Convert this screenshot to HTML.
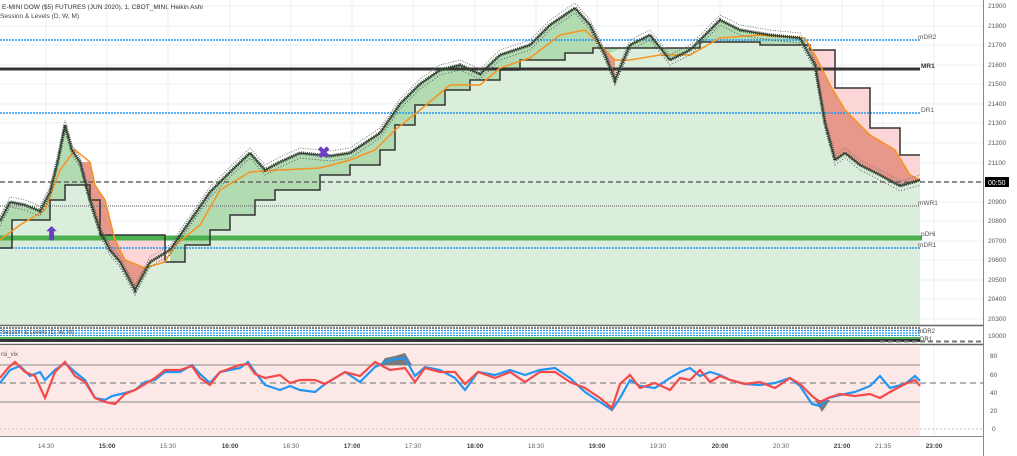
<!DOCTYPE html>
<html><head><meta charset="utf-8"><style>
html,body{margin:0;padding:0;background:#fff;width:1017px;height:456px;overflow:hidden}
svg{display:block;font-family:"Liberation Sans",sans-serif}
</style></head><body>
<svg width="1017" height="456" viewBox="0 0 1017 456" xmlns="http://www.w3.org/2000/svg">
<g stroke="#eaf0f4" stroke-width="1">
<line x1="46" y1="0" x2="46" y2="436"/><line x1="107" y1="0" x2="107" y2="436"/><line x1="168" y1="0" x2="168" y2="436"/><line x1="230" y1="0" x2="230" y2="436"/><line x1="291" y1="0" x2="291" y2="436"/><line x1="352" y1="0" x2="352" y2="436"/><line x1="413" y1="0" x2="413" y2="436"/><line x1="475" y1="0" x2="475" y2="436"/><line x1="536" y1="0" x2="536" y2="436"/><line x1="597" y1="0" x2="597" y2="436"/><line x1="658" y1="0" x2="658" y2="436"/><line x1="720" y1="0" x2="720" y2="436"/><line x1="781" y1="0" x2="781" y2="436"/><line x1="842" y1="0" x2="842" y2="436"/><line x1="883" y1="0" x2="883" y2="436"/><line x1="934" y1="0" x2="934" y2="436"/>
<line x1="0" y1="6" x2="983" y2="6"/><line x1="0" y1="26" x2="983" y2="26"/><line x1="0" y1="45" x2="983" y2="45"/><line x1="0" y1="65" x2="983" y2="65"/><line x1="0" y1="84" x2="983" y2="84"/><line x1="0" y1="104" x2="983" y2="104"/><line x1="0" y1="123" x2="983" y2="123"/><line x1="0" y1="143" x2="983" y2="143"/><line x1="0" y1="163" x2="983" y2="163"/><line x1="0" y1="202" x2="983" y2="202"/><line x1="0" y1="221" x2="983" y2="221"/><line x1="0" y1="241" x2="983" y2="241"/><line x1="0" y1="260" x2="983" y2="260"/><line x1="0" y1="280" x2="983" y2="280"/><line x1="0" y1="299" x2="983" y2="299"/><line x1="0" y1="319" x2="983" y2="319"/>
</g>
<polygon fill="#dbeedb" points="0,248 12,248 12,220 50,220 50,200 65,200 65,185 90,185 90,200 100,200 100,235 165,235 165,262 185,262 185,245 210,245 210,230 230,230 230,215 255,215 255,200 275,200 275,190 320,190 320,175 350,175 350,165 380,165 380,150 395,150 395,125 415,125 415,105 445,105 445,90 470,90 470,80 500,80 500,70 520,70 520,60 565,60 565,53 593,53 593,48 700,48 700,42 760,42 760,45 810,45 810,50 835,50 835,88 870,88 870,128 900,128 900,155 920,155 920,325 0,325"/>
<polygon fill="#b3dbb2" points="0,221 10,202 25,205 40,211 50,192 58,160 65,125 72,150 80,162 90,200 90,185 65,185 65,200 50,200 50,220 12,220 12,248 0,248"/>
<polygon fill="#b3dbb2" points="170,250 190,221 210,192 230,172 250,153 265,170 280,162 300,153 330,156 350,153 380,133 400,104 420,84 440,70 460,65 480,74 500,55 530,45 550,25 575,8 590,25 605,55 630,45 650,35 670,60 690,50 720,20 740,30 770,35 800,38 810,45 760,45 760,42 700,42 700,48 593,48 593,53 565,53 565,60 520,60 520,70 500,70 500,80 470,80 470,90 445,90 445,105 415,105 415,125 395,125 395,150 380,150 380,165 350,165 350,175 320,175 320,190 275,190 275,200 255,200 255,215 230,215 230,230 210,230 210,245 185,245 185,262 170,262"/>
<polygon fill="#fcd6d6" points="90,185 100,200 100,235 165,235 165,262 150,262 135,290 120,262 110,250 100,231 90,200"/>
<polygon fill="#fcd6d6" points="805,45 810,50 835,50 835,88 870,88 870,128 900,128 900,155 920,155 920,180 900,186 880,175 860,165 845,153 835,160 825,123 815,65 805,40"/>
<polygon fill="#e8978b" points="90,162 95,185 105,200 115,240 125,260 145,268 150,262 135,290 120,262 110,250 100,231 90,200 80,162"/>
<polygon fill="#e8978b" points="805,38 815,55 830,85 845,110 870,135 895,150 910,175 920,180 900,186 880,175 860,165 845,153 835,160 825,123 815,65"/>
<polygon fill="#e8978b" points="590,25 600,45 615,60 615,80 605,55"/>
<line x1="0" y1="40" x2="920" y2="40" stroke="#2196f3" stroke-width="1.5" stroke-dasharray="2,1"/>
<line x1="0" y1="69" x2="920" y2="69" stroke="#333" stroke-width="3"/>
<line x1="0" y1="113" x2="920" y2="113" stroke="#2196f3" stroke-width="1.5" stroke-dasharray="2,1"/>
<line x1="0" y1="206" x2="920" y2="206" stroke="#888" stroke-width="1.5" stroke-dasharray="1,1"/>
<line x1="0" y1="238" x2="922" y2="238" stroke="#4caf50" stroke-width="5"/>
<line x1="0" y1="248" x2="920" y2="248" stroke="#2196f3" stroke-width="1.5" stroke-dasharray="2,1"/>
<line x1="0" y1="182" x2="983" y2="182" stroke="#666" stroke-width="1.5" stroke-dasharray="5,3"/>
<polyline fill="none" stroke="#333" stroke-width="1.5" points="0,248 12,248 12,220 50,220 50,200 65,200 65,185 90,185 90,200 100,200 100,235 165,235 165,262 185,262 185,245 210,245 210,230 230,230 230,215 255,215 255,200 275,200 275,190 320,190 320,175 350,175 350,165 380,165 380,150 395,150 395,125 415,125 415,105 445,105 445,90 470,90 470,80 500,80 500,70 520,70 520,60 565,60 565,53 593,53 593,48 700,48 700,42 760,42 760,45 810,45 810,50 835,50 835,88 870,88 870,128 900,128 900,155 920,155"/>
<polyline fill="none" stroke="#f7931e" stroke-width="1.5" points="0,240 20,225 45,210 60,170 75,150 90,162 95,185 105,200 115,240 125,260 145,268 165,262 175,245 200,225 220,190 250,172 280,170 320,168 350,160 375,150 395,130 420,110 450,85 480,85 500,68 530,58 560,35 585,30 600,45 615,60 630,60 660,55 690,55 720,38 760,35 805,38 815,55 830,85 845,110 870,135 895,150 910,175 920,180"/>
<!-- wick band -->
<polyline fill="none" stroke="#777" stroke-width="1" stroke-dasharray="1,1.5" transform="translate(0,-5)" points="0,221 10,202 25,205 40,211 50,192 58,160 65,125 72,150 80,162 90,200 100,231 110,250 120,262 135,290 150,262 170,250 190,221 210,192 230,172 250,153 265,170 280,162 300,153 330,156 350,153 380,133 400,104 420,84 440,70 460,65 480,74 500,55 530,45 550,25 575,8 590,25 605,55 615,80 630,45 650,35 670,60 690,50 720,20 740,30 770,35 800,38 815,65 825,123 835,160 845,153 860,165 880,175 900,186 920,180"/>
<polyline fill="none" stroke="#556" stroke-width="1" stroke-dasharray="1,2" transform="translate(0,5)" points="0,221 10,202 25,205 40,211 50,192 58,160 65,125 72,150 80,162 90,200 100,231 110,250 120,262 135,290 150,262 170,250 190,221 210,192 230,172 250,153 265,170 280,162 300,153 330,156 350,153 380,133 400,104 420,84 440,70 460,65 480,74 500,55 530,45 550,25 575,8 590,25 605,55 615,80 630,45 650,35 670,60 690,50 720,20 740,30 770,35 800,38 815,65 825,123 835,160 845,153 860,165 880,175 900,186 920,180"/>
<polyline fill="none" stroke="#3a4a3a" stroke-width="3.5" stroke-dasharray="1,1" points="0,221 10,202 25,205 40,211 50,192 58,160 65,125 72,150 80,162 90,200 100,231 110,250 120,262 135,290 150,262 170,250 190,221 210,192 230,172 250,153 265,170 280,162 300,153 330,156 350,153 380,133 400,104 420,84 440,70 460,65 480,74 500,55 530,45 550,25 575,8 590,25 605,55 615,80 630,45 650,35 670,60 690,50 720,20 740,30 770,35 800,38 815,65 825,123 835,160 845,153 860,165 880,175 900,186 920,180"/>
<polyline fill="none" stroke="#2e3d2e" stroke-width="1.2" points="0,221 10,202 25,205 40,211 50,192 58,160 65,125 72,150 80,162 90,200 100,231 110,250 120,262 135,290 150,262 170,250 190,221 210,192 230,172 250,153 265,170 280,162 300,153 330,156 350,153 380,133 400,104 420,84 440,70 460,65 480,74 500,55 530,45 550,25 575,8 590,25 605,55 615,80 630,45 650,35 670,60 690,50 720,20 740,30 770,35 800,38 815,65 825,123 835,160 845,153 860,165 880,175 900,186 920,180"/>
<text x="44" y="240" font-size="18" fill="#6a3fc1" font-weight="bold">⬆</text>
<text x="317" y="158" font-size="16" fill="#6a3fc1" font-weight="bold">✖</text>
<g font-size="6.5" fill="#555">
<text x="918" y="39">mDR2</text><text x="921" y="68" font-weight="bold" fill="#333">MR1</text><text x="921" y="112">DR1</text><text x="918" y="205">mWR1</text><text x="921" y="236">pDHi</text><text x="918" y="247">mDR1</text>
</g>
<text x="2" y="9" font-size="6.5" fill="#333">E-MINI DOW ($5) FUTURES (JUN 2020), 1, CBOT_MINI, Heikin Ashi</text>
<text x="0" y="18" font-size="6.5" fill="#444">Session &amp; Levels (D, W, M)</text>
<rect x="0" y="325" width="983" height="20" fill="#fff"/>
<line x1="0" y1="325.5" x2="1017" y2="325.5" stroke="#666" stroke-width="1.5"/>
<g stroke-width="1.2">
<line x1="0" y1="328" x2="920" y2="328" stroke="#333" stroke-dasharray="2,1"/>
<line x1="0" y1="330.5" x2="920" y2="330.5" stroke="#2196f3" stroke-dasharray="2,1"/>
<line x1="0" y1="333" x2="920" y2="333" stroke="#2196f3" stroke-dasharray="2,1"/>
<line x1="0" y1="335.5" x2="920" y2="335.5" stroke="#2196f3" stroke-dasharray="2,1"/>
<line x1="0" y1="338" x2="920" y2="338" stroke="#4caf50" stroke-width="2"/>
<line x1="0" y1="340.5" x2="920" y2="340.5" stroke="#333" stroke-width="3"/>
<line x1="880" y1="341.5" x2="983" y2="341.5" stroke="#777" stroke-dasharray="5,3" stroke-width="2"/>
</g>
<text x="1" y="334" font-size="6" fill="#555">Session &amp; Levels (D, W, M)</text>
<text x="918" y="333" font-size="6" fill="#444">mDR2</text>
<text x="920" y="341" font-size="6" fill="#444">DR1</text>
<line x1="0" y1="344.5" x2="1017" y2="344.5" stroke="#666" stroke-width="1.5"/>
<rect x="0" y="345" width="920" height="91" fill="#fde8e8"/>
<line x1="0" y1="365" x2="920" y2="365" stroke="#888" stroke-width="1"/>
<line x1="0" y1="402" x2="920" y2="402" stroke="#888" stroke-width="1"/>
<line x1="0" y1="383" x2="983" y2="383" stroke="#888" stroke-width="1.2" stroke-dasharray="6,4"/>
<line x1="0" y1="429" x2="983" y2="429" stroke="#bbb" stroke-width="0.8" stroke-dasharray="2,2"/>
<text x="1" y="356" font-size="6" fill="#555">rsi_vix</text>
<polygon fill="#7a7a7a" points="380,365 385,358 395,356 405,353 412,365"/>
<polygon fill="#7a7a7a" points="815,400 822,412 830,400"/>
<polyline fill="none" stroke="#2196f3" stroke-width="2.2" points="0,383 10,370 20,366 30,376 40,372 45,380 55,370 65,363 75,372 85,380 95,398 105,400 112,396 125,393 135,390 145,382 155,380 165,372 180,372 192,365 200,374 210,383 220,372 240,368 248,362 255,372 265,385 280,390 290,386 300,390 315,392 325,384 345,372 360,382 375,367 390,360 405,358 415,376 425,367 440,370 455,378 465,390 478,372 495,375 510,370 525,375 540,370 555,368 570,378 585,392 600,402 612,410 620,398 630,380 640,386 655,388 670,378 680,372 690,368 700,376 710,372 720,375 730,380 745,384 760,385 775,383 790,378 800,386 812,404 820,406 828,398 840,395 855,392 870,386 880,376 890,388 905,384 915,376 920,381"/>
<polyline fill="none" stroke="#f44a4a" stroke-width="2.2" points="0,378 8,368 15,362 25,372 35,376 45,398 55,372 65,362 75,376 85,382 95,398 105,402 115,404 125,394 135,390 145,384 155,378 165,370 180,370 192,366 200,378 210,385 220,372 240,365 248,364 255,374 265,378 280,375 290,383 300,380 315,380 325,384 345,372 360,376 375,362 390,370 405,368 415,382 425,368 440,372 455,372 465,384 478,372 495,378 510,372 525,382 540,372 555,372 570,382 585,388 600,398 612,408 620,384 630,375 640,388 655,383 670,390 680,378 690,380 700,370 710,382 720,376 730,380 745,384 760,382 775,388 790,378 800,384 812,396 820,402 828,398 840,394 855,396 870,394 880,398 890,392 905,384 915,380 920,386"/>
<rect x="983" y="0" width="34" height="456" fill="#fff"/>
<line x1="983.5" y1="0" x2="983.5" y2="456" stroke="#888" stroke-width="1"/>
<line x1="0" y1="436.5" x2="983" y2="436.5" stroke="#888" stroke-width="1"/>
<g font-size="6.5" fill="#555">
<text x="988" y="8">21900</text><text x="988" y="28">21800</text><text x="988" y="47">21700</text><text x="988" y="67">21600</text><text x="988" y="86">21500</text><text x="988" y="106">21400</text><text x="988" y="125">21300</text><text x="988" y="145">21200</text><text x="988" y="165">21100</text><text x="988" y="204">20900</text><text x="988" y="223">20800</text><text x="988" y="243">20700</text><text x="988" y="262">20600</text><text x="988" y="282">20500</text><text x="988" y="301">20400</text><text x="988" y="321">20300</text>
<text x="988" y="338">10000</text>
<text x="990" y="358">80</text><text x="990" y="377">60</text><text x="990" y="395">40</text><text x="990" y="413">20</text><text x="992" y="431">0</text>
</g>
<rect x="985" y="177" width="24" height="10" fill="#000"/>
<text x="988" y="185" font-size="7" fill="#fff">00:50</text>
<g font-size="6.5" fill="#666" text-anchor="middle">
<text x="46" y="448">14:30</text><text x="107" y="448" font-weight="bold" fill="#444">15:00</text><text x="168" y="448">15:30</text><text x="230" y="448" font-weight="bold" fill="#444">16:00</text><text x="291" y="448">16:30</text><text x="352" y="448" font-weight="bold" fill="#444">17:00</text><text x="413" y="448">17:30</text><text x="475" y="448" font-weight="bold" fill="#444">18:00</text><text x="536" y="448">18:30</text><text x="597" y="448" font-weight="bold" fill="#444">19:00</text><text x="658" y="448">19:30</text><text x="720" y="448" font-weight="bold" fill="#444">20:00</text><text x="781" y="448">20:30</text><text x="842" y="448" font-weight="bold" fill="#444">21:00</text><text x="883" y="448">21:35</text><text x="934" y="448" font-weight="bold" fill="#444">23:00</text>
</g>
</svg>
</body></html>
